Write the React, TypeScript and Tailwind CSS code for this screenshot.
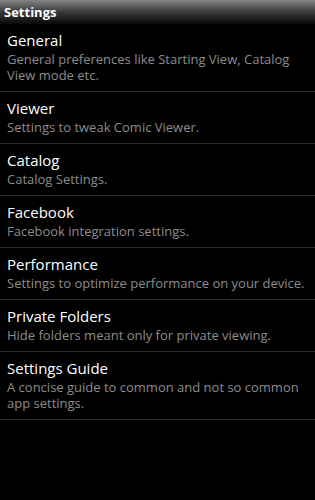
import React from 'react';

const items = [
  { title: 'General', desc: 'General preferences like Starting View, Catalog View mode etc.' },
  { title: 'Viewer', desc: 'Settings to tweak Comic Viewer.' },
  { title: 'Catalog', desc: 'Catalog Settings.' },
  { title: 'Facebook', desc: 'Facebook integration settings.' },
  { title: 'Performance', desc: 'Settings to optimize performance on your device.' },
  { title: 'Private Folders', desc: 'Hide folders meant only for private viewing.' },
  { title: 'Settings Guide', desc: 'A concise guide to common and not so common app settings.' },
];

const App: React.FC = () => {
  return (
    <div className="w-[315px] h-[500px] bg-black font-['Open_Sans','Noto_Sans',sans-serif] overflow-hidden">
      <div className="h-6 px-1 flex items-center bg-gradient-to-b from-[#858585] via-[#3a3a3a] to-[#0a0a0a]">
        <h1 className="text-[13px] font-bold text-white leading-none">Settings</h1>
      </div>
      <ul>
        {items.map((item) => (
          <li key={item.title} className="border-b border-[#2e2e2e] pl-[7px] pr-2 pt-[6px] pb-[8px]">
            <div className="text-[15px] leading-[21px] text-white">{item.title}</div>
            <div className="text-[13px] leading-4 text-[#8c8c8c]">{item.desc}</div>
          </li>
        ))}
      </ul>
    </div>
  );
};

export default App;
